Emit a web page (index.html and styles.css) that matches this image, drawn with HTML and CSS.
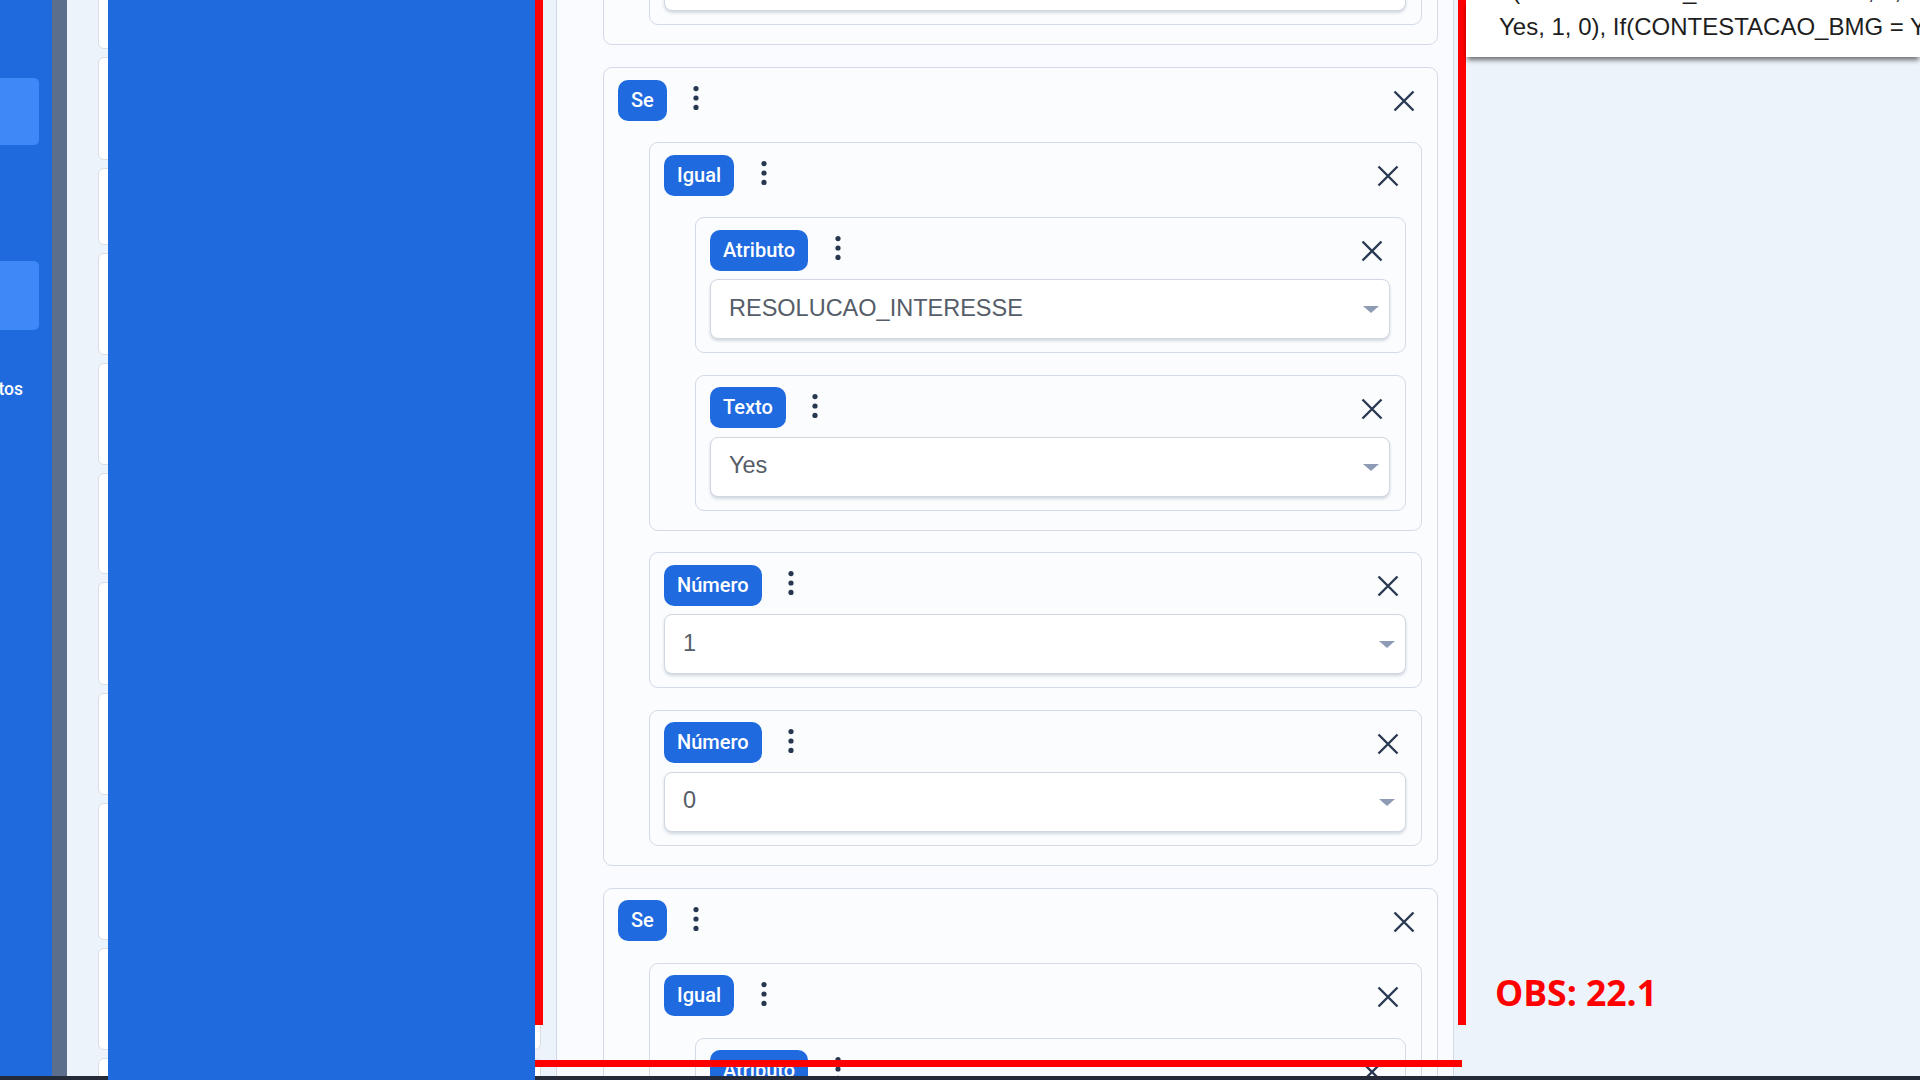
FILE: index.html
```html
<!DOCTYPE html>
<html lang="pt-BR">
<head>
<meta charset="utf-8">
<title>Editor de fórmula</title>
<link rel="stylesheet" href="styles.css">
</head>
<body>
<div class="screen">
  <aside class="sidebar">
    <div class="side-box side-box--first"></div>
    <div class="side-box side-box--second"></div>
    <div class="side-item"><span>Contatos</span></div>
  </aside>
  <div class="scroll-track"></div>
  <section class="list">
    <div class="list-stack">
      <div class="list-card h100"></div>
      <div class="list-card h103"></div>
      <div class="list-card h77"></div>
      <div class="list-card h102"></div>
      <div class="list-card h102"></div>
      <div class="list-card h101"></div>
      <div class="list-card h103"></div>
      <div class="list-card h102"></div>
      <div class="list-card h137"></div>
      <div class="list-card h102"></div>
      <div class="list-card h100"></div>
    </div>
  </section>
  <main class="panel">
    <div class="panel-inner">
      <!-- previous block (scrolled out of view) -->
      <div class="node">
        <div class="head">
          <span class="badge">Se</span>
          <svg class="kebab" viewBox="0 0 24 36"><circle cx="12" cy="8.6" r="2.6"/><circle cx="12" cy="18" r="2.6"/><circle cx="12" cy="27.4" r="2.6"/></svg>
          <svg class="close" viewBox="0 0 22 22"><path d="M1.5 1.5 20.5 20.5M20.5 1.5 1.5 20.5"/></svg>
        </div>
        <div class="kids">
          <div class="node leaf">
            <div class="head">
              <span class="badge">Número</span>
              <svg class="kebab" viewBox="0 0 24 36"><circle cx="12" cy="8.6" r="2.6"/><circle cx="12" cy="18" r="2.6"/><circle cx="12" cy="27.4" r="2.6"/></svg>
              <svg class="close" viewBox="0 0 22 22"><path d="M1.5 1.5 20.5 20.5M20.5 1.5 1.5 20.5"/></svg>
            </div>
            <div class="field"><span class="val">0</span><span class="caret"></span></div>
          </div>
        </div>
      </div>

      <div class="node">
        <div class="head">
          <span class="badge">Se</span>
          <svg class="kebab" viewBox="0 0 24 36"><circle cx="12" cy="8.6" r="2.6"/><circle cx="12" cy="18" r="2.6"/><circle cx="12" cy="27.4" r="2.6"/></svg>
          <svg class="close" viewBox="0 0 22 22"><path d="M1.5 1.5 20.5 20.5M20.5 1.5 1.5 20.5"/></svg>
        </div>
        <div class="kids">
          <div class="node">
            <div class="head">
              <span class="badge">Igual</span>
              <svg class="kebab" viewBox="0 0 24 36"><circle cx="12" cy="8.6" r="2.6"/><circle cx="12" cy="18" r="2.6"/><circle cx="12" cy="27.4" r="2.6"/></svg>
              <svg class="close" viewBox="0 0 22 22"><path d="M1.5 1.5 20.5 20.5M20.5 1.5 1.5 20.5"/></svg>
            </div>
            <div class="kids">
              <div class="node leaf">
                <div class="head">
                  <span class="badge">Atributo</span>
                  <svg class="kebab" viewBox="0 0 24 36"><circle cx="12" cy="8.6" r="2.6"/><circle cx="12" cy="18" r="2.6"/><circle cx="12" cy="27.4" r="2.6"/></svg>
                  <svg class="close" viewBox="0 0 22 22"><path d="M1.5 1.5 20.5 20.5M20.5 1.5 1.5 20.5"/></svg>
                </div>
                <div class="field"><span class="val">RESOLUCAO_INTERESSE</span><span class="caret"></span></div>
              </div>
              <div class="node leaf">
                <div class="head">
                  <span class="badge">Texto</span>
                  <svg class="kebab" viewBox="0 0 24 36"><circle cx="12" cy="8.6" r="2.6"/><circle cx="12" cy="18" r="2.6"/><circle cx="12" cy="27.4" r="2.6"/></svg>
                  <svg class="close" viewBox="0 0 22 22"><path d="M1.5 1.5 20.5 20.5M20.5 1.5 1.5 20.5"/></svg>
                </div>
                <div class="field"><span class="val">Yes</span><span class="caret"></span></div>
              </div>
            </div>
          </div>
          <div class="node leaf">
            <div class="head">
              <span class="badge">Número</span>
              <svg class="kebab" viewBox="0 0 24 36"><circle cx="12" cy="8.6" r="2.6"/><circle cx="12" cy="18" r="2.6"/><circle cx="12" cy="27.4" r="2.6"/></svg>
              <svg class="close" viewBox="0 0 22 22"><path d="M1.5 1.5 20.5 20.5M20.5 1.5 1.5 20.5"/></svg>
            </div>
            <div class="field"><span class="val">1</span><span class="caret"></span></div>
          </div>
          <div class="node leaf">
            <div class="head">
              <span class="badge">Número</span>
              <svg class="kebab" viewBox="0 0 24 36"><circle cx="12" cy="8.6" r="2.6"/><circle cx="12" cy="18" r="2.6"/><circle cx="12" cy="27.4" r="2.6"/></svg>
              <svg class="close" viewBox="0 0 22 22"><path d="M1.5 1.5 20.5 20.5M20.5 1.5 1.5 20.5"/></svg>
            </div>
            <div class="field"><span class="val">0</span><span class="caret"></span></div>
          </div>
        </div>
      </div>

      <div class="node">
        <div class="head">
          <span class="badge">Se</span>
          <svg class="kebab" viewBox="0 0 24 36"><circle cx="12" cy="8.6" r="2.6"/><circle cx="12" cy="18" r="2.6"/><circle cx="12" cy="27.4" r="2.6"/></svg>
          <svg class="close" viewBox="0 0 22 22"><path d="M1.5 1.5 20.5 20.5M20.5 1.5 1.5 20.5"/></svg>
        </div>
        <div class="kids">
          <div class="node">
            <div class="head">
              <span class="badge">Igual</span>
              <svg class="kebab" viewBox="0 0 24 36"><circle cx="12" cy="8.6" r="2.6"/><circle cx="12" cy="18" r="2.6"/><circle cx="12" cy="27.4" r="2.6"/></svg>
              <svg class="close" viewBox="0 0 22 22"><path d="M1.5 1.5 20.5 20.5M20.5 1.5 1.5 20.5"/></svg>
            </div>
            <div class="kids">
              <div class="node leaf">
                <div class="head">
                  <span class="badge">Atributo</span>
                  <svg class="kebab" viewBox="0 0 24 36"><circle cx="12" cy="8.6" r="2.6"/><circle cx="12" cy="18" r="2.6"/><circle cx="12" cy="27.4" r="2.6"/></svg>
                  <svg class="close" viewBox="0 0 22 22"><path d="M1.5 1.5 20.5 20.5M20.5 1.5 1.5 20.5"/></svg>
                </div>
                <div class="field"><span class="val">CONTESTACAO_BMG</span><span class="caret"></span></div>
              </div>
            </div>
          </div>
        </div>
      </div>
    </div>
  </main>
  <div class="right-area"></div>
</div>
<div class="taskbar"></div>

<div class="redact"></div>
<div class="mark mark--left"></div>
<div class="mark mark--right"></div>
<div class="mark mark--bottom"></div>

<div class="tooltip">
  <div class="tip-text">
    <div>If(NEGOCIACAO_ACORDO = Yes, 1, 0), If(</div>
    <div>Yes, 1, 0), If(CONTESTACAO_BMG = Yes, 1, 0)</div>
  </div>
</div>

<div class="obs">OBS: 22.1</div>
</body>
</html>
```
FILE: styles.css
```css
* { box-sizing: border-box; }

html, body {
  margin: 0;
  padding: 0;
  width: 1920px;
  height: 1080px;
  overflow: hidden;
  background: #edf3fb;
  font-family: Roboto, "Liberation Sans", Arial, sans-serif;
}

.screen {
  display: flex;
  height: 1076px;
  overflow: hidden;
}

/* sidebar */
.sidebar {
  flex: none;
  width: 52px;
  background: #1f6bdd;
  display: flex;
  flex-direction: column;
  padding-top: 78px;
}
.side-box {
  width: 39px;
  background: #3f88f7;
  border-radius: 0 5px 5px 0;
}
.side-box--first { height: 67px; }
.side-box--second { height: 69px; margin-top: 116px; }
.side-item {
  margin-top: 49px;
  display: flex;
  justify-content: flex-end;
  padding-right: 29px;
  height: 20px;
  line-height: 20px;
  color: #ffffff;
  font-size: 17.5px;
  font-weight: 500;
  white-space: nowrap;
}

.scroll-track {
  flex: none;
  width: 15px;
  background: #5b6e8b;
}

/* background list */
.list {
  flex: none;
  width: 474px;
  padding-left: 31px;
}
.list-stack {
  margin-top: -51px;
  display: flex;
  flex-direction: column;
  gap: 8px;
}
.list-card {
  background: #ffffff;
  border: 1px solid #dadee5;
  border-radius: 6px;
}
.h77 { height: 77px; }
.h100 { height: 100px; }
.h101 { height: 101px; }
.h102 { height: 102px; }
.h103 { height: 103px; }
.h137 { height: 137px; }

/* formula panel */
.panel {
  flex: none;
  width: 898px;
  margin-left: 15px;
  background: #f9fbfe;
  border-left: 1px solid #d3dae5;
  border-right: 1px solid #d3dae5;
  padding: 0 15px 0 46px;
  overflow: hidden;
}
.panel-inner {
  margin-top: -186px;
  display: flex;
  flex-direction: column;
  gap: 22px;
}

.node {
  border: 1px solid #d3dbe7;
  border-radius: 9px;
  padding: 11px 15px 19px 14px;
  background: #fafcfe;
}
.node.leaf { padding-bottom: 13px; }

.head {
  display: flex;
  align-items: center;
  height: 42px;
}
.badge {
  height: 41px;
  line-height: 41px;
  padding: 0 13px;
  border-radius: 10px;
  background: #1f6adf;
  color: #ffffff;
  font-family: Roboto, "Liberation Sans", sans-serif;
  font-weight: 500;
  font-size: 20px;
  white-space: nowrap;
}
.kebab {
  width: 24px;
  height: 36px;
  margin-left: 17.5px;
  margin-bottom: 4px;
  fill: #27374f;
}
.close {
  width: 22px;
  height: 22px;
  margin-left: auto;
  margin-right: 7px;
  margin-top: 2px;
  fill: none;
  stroke: #2a3a52;
  stroke-width: 2.4;
}

.kids {
  display: flex;
  flex-direction: column;
  gap: 21.5px;
  margin: 21px 0 0 31px;
}

.field {
  margin-top: 8px;
  height: 60px;
  border: 1px solid #d0d7e2;
  border-radius: 8px;
  background: #ffffff;
  box-shadow: 0 2px 3px rgba(40, 60, 90, 0.18);
  display: flex;
  align-items: center;
  padding: 0 10px 2px 18px;
  font-family: "Liberation Sans", Arial, sans-serif;
  font-size: 23.5px;
  color: #565d68;
}
.field .val { flex: 1; white-space: nowrap; }
.caret {
  width: 0;
  height: 0;
  border-left: 8.5px solid transparent;
  border-right: 8.5px solid transparent;
  border-top: 7.5px solid #8d9cb4;
  margin-top: 3px;
}

.right-area { flex: 1; }

.taskbar {
  height: 4px;
  background: #252a38;
}

/* annotations laid over the screenshot */
.redact {
  position: absolute;
  left: 108px;
  top: 0;
  width: 427px;
  height: 1080px;
  background: #1f6bdd;
}
.mark {
  position: absolute;
  background: #ff0000;
}
.mark--left { left: 535px; top: 0; width: 8px; height: 1025px; }
.mark--right { left: 1458px; top: 0; width: 8px; height: 1025px; }
.mark--bottom { left: 535px; top: 1060px; width: 927px; height: 7px; }

.tooltip {
  position: absolute;
  left: 1466px;
  top: 0;
  width: 454px;
  height: 57px;
  background: #ffffff;
  box-shadow: 0 4px 5px -1px rgba(0, 0, 0, 0.55);
  overflow: hidden;
  padding-left: 33px;
}
.tip-text {
  margin-top: -27px;
  font-family: "Liberation Sans", Arial, sans-serif;
  font-size: 24px;
  line-height: 36px;
  color: #1e1e1e;
  white-space: nowrap;
}

.obs {
  position: absolute;
  left: 1495px;
  top: 968px;
  font-family: "Open Sans", sans-serif;
  font-weight: 700;
  font-size: 35.5px;
  color: #ff0000;
  white-space: nowrap;
}
```
